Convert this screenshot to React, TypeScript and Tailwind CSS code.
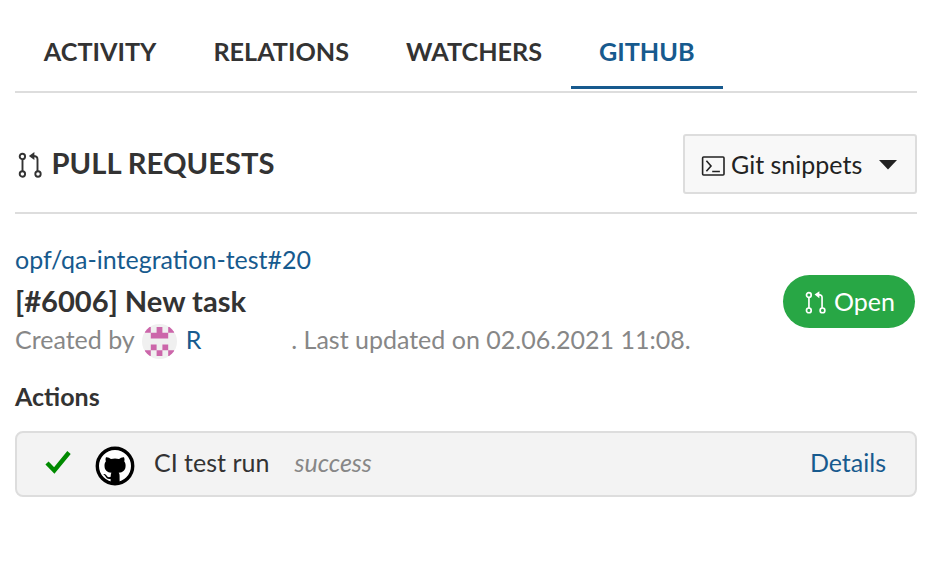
import React from "react";

function PullRequestIcon({ className }: { className?: string }) {
  return (
    <svg viewBox="0 0 24 26" className={className} fill="none" stroke="currentColor" strokeWidth="1.9">
      <circle cx="4.4" cy="4.4" r="2.7" />
      <circle cx="4.4" cy="22" r="2.7" />
      <circle cx="20" cy="22" r="2.7" />
      <path d="M4.5 7.1V19.3M19.5 19.3V7.2C19.5 4.9 18.4 4 15 4" />
      <path d="M10.9 3.9L16.4 .1V8.1Z" fill="currentColor" stroke="none" />
    </svg>
  );
}

function ConsoleIcon() {
  return (
    <svg viewBox="0 0 24 20" className="mt-[3px] h-5 w-6 shrink-0" fill="none" stroke="currentColor" strokeWidth="1.6">
      <rect x="1.6" y="1" width="21.4" height="18" rx="1" />
      <path d="M5.4 4.7L10 10L5.4 15.3M11.2 15.5H18.9" />
    </svg>
  );
}

function Avatar() {
  return (
    <svg viewBox="0 0 35 35" className="mt-[6px] ml-[7px] size-[35px] shrink-0">
      <clipPath id="avatar-clip">
        <circle cx="17.5" cy="17.5" r="17.5" />
      </clipPath>
      <g clipPath="url(#avatar-clip)">
        <rect width="35" height="35" fill="#f0f0f0" />
        <path
          fill="#cc66aa"
          d="M2.9 2.9h5.9v5.9h-5.9zM14.6 2.9h5.8v5.9h-5.8zM26.2 2.9h5.9v5.9h-5.9zM8.8 8.8h17.4v5.8h-17.4zM8.8 20.4h5.8v5.8h-5.8zM20.4 20.4h5.8v5.8h-5.8zM2.9 26.2h5.9v5.9h-5.9zM14.6 26.2h5.8v5.9h-5.8zM26.2 26.2h5.9v5.9h-5.9z"
        />
      </g>
    </svg>
  );
}

function GithubAvatar() {
  return (
    <svg viewBox="0 0 40 40" className="mt-[8px] ml-6 size-10 shrink-0">
      <circle cx="20" cy="20" r="17.7" fill="#fff" stroke="#000" strokeWidth="3.4" />
      <path
        d="M11 11.2C12.8 10.9 14.7 12 16 12.9C18.7 12.2 21.3 12.2 24 12.9C25.3 12 27.2 10.9 29 11.2C29.7 12.8 29.6 14.2 29.2 15.2C30.2 16.4 30.6 17.7 30.6 19.4C30.6 24.3 28 26.2 23.7 26.8C24.4 27.6 24.6 28.5 24.6 30V37H15.6V32.9C12.2 33.5 11.2 31.8 10.2 30.1C9.7 29.2 9 28.7 8.3 28.2C10.3 27.7 11.3 29.1 12.1 30.2C13 31.4 14.4 31.3 15.7 30.8C15.8 29 15.8 27.8 16.5 26.8C12.1 26.2 9.5 24.3 9.5 19.4C9.5 17.7 9.9 16.4 10.9 15.2C10.4 14.1 10.4 12.7 11 11.2Z"
        fill="#000"
      />
    </svg>
  );
}

const tabs = ["ACTIVITY", "RELATIONS", "WATCHERS", "GITHUB"];

export default function App() {
  return (
    <main className="h-[581px] w-[939px] bg-white pr-[22px] pl-[15px] font-[Lato,sans-serif] text-[25px] leading-[30px] text-[#333]">
      <nav className="flex h-[93px] items-end border-b-2 border-[#ddd] pb-[2px] pl-[0.3px] text-[25.2px] font-bold">
        {tabs.map((tab) => (
          <a
            key={tab}
            className={
              tab === "GITHUB"
                ? "h-[53px] border-b-[3px] border-[#175a8e] px-[28.4px] text-[#175a8e]"
                : "h-[53px] border-b-[3px] border-transparent px-[28.5px]"
            }
          >
            {tab}
          </a>
        ))}
      </nav>

      <header className="flex h-[121px] items-center justify-between border-b-2 border-[#ddd] pt-[23px]">
        <h1 className="flex items-center pb-[3px] text-[29.2px] leading-9 font-bold">
          <PullRequestIcon className="mt-[5px] mr-[10px] ml-[2.5px] h-[26px] w-6" />
          PULL REQUESTS
        </h1>
        <button className="flex h-[60px] w-[234px] items-center rounded-[3px] border-2 border-[#ddd] bg-[#f8f8f8] pl-4 text-[#222]">
          <ConsoleIcon />
          <span className="ml-[6px]">Git snippets</span>
          <svg viewBox="0 0 18 10" className="mt-[2px] ml-[17px] h-[10px] w-[18px]" fill="#222">
            <path d="M0 0H18L9 9.5Z" />
          </svg>
        </button>
      </header>

      <section className="pt-[30px]">
        <a className="block text-[#175a8e]">opf/qa-integration-test#20</a>
        <div className="mt-px flex h-[84px] justify-between">
          <div>
            <h2 className="mt-[9px] text-[29.15px] leading-[34px] font-bold">[#6006] New task</h2>
            <p className="mt-[3px] flex h-[35px] items-center text-[#878787]">
              Created by
              <Avatar />
              <a className="ml-[9px] w-[105.5px] text-[#175a8e]">R</a>
              <span>. Last updated on 02.06.2021 11:08.</span>
            </p>
          </div>
          <span className="mr-[2px] flex h-[53px] w-[132px] items-center rounded-full bg-[#28a745] pb-[2px] pl-[22px] text-white">
            <PullRequestIcon className="mt-[3px] mr-2 h-[23px] w-[21px]" />
            Open
          </span>
        </div>
      </section>

      <section>
        <h3 className="mt-[22px] text-[25px] font-bold">Actions</h3>
        <div className="mt-5 flex h-[66px] items-center rounded-lg border-2 border-[#ddd] bg-[#f3f3f3] pb-[4px]">
          <svg viewBox="0 0 26 24" className="ml-7 h-6 w-[26px]" fill="none" stroke="#008a00" strokeWidth="4.4">
            <path d="M2 13L9.3 20.5L24 2.5" />
          </svg>
          <GithubAvatar />
          <span className="ml-[19px]">CI test run</span>
          <em className="ml-[25px] text-[#878787]">success</em>
          <a className="mr-[29px] ml-auto text-[#175a8e]">Details</a>
        </div>
      </section>
    </main>
  );
}
